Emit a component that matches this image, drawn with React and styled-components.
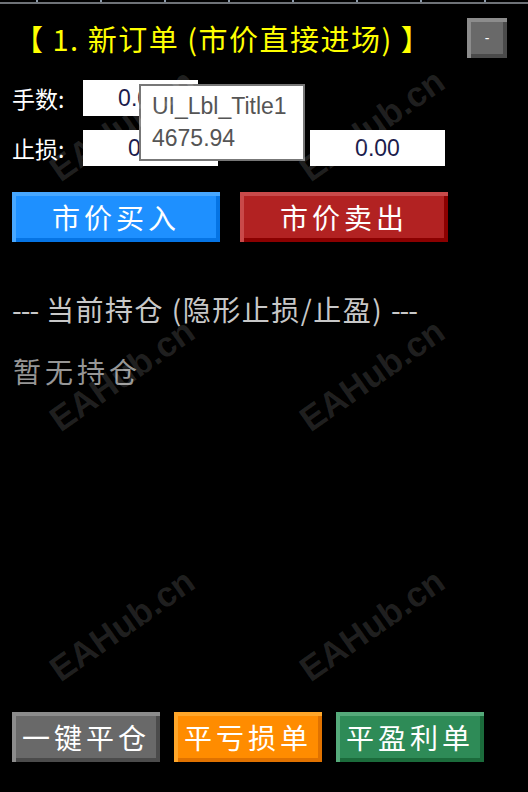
import React from 'react';
import styled, { createGlobalStyle } from 'styled-components';

const GlobalStyle = createGlobalStyle`
  html, body {
    margin: 0;
    padding: 0;
    background: #000;
  }
  body {
    font-family: "Noto Sans CJK SC", "Noto Sans", sans-serif;
  }
`;

const CJK = `"Noto Sans CJK SC", "Noto Sans", sans-serif`;

const Panel = styled.div`
  position: relative;
  width: 528px;
  height: 792px;
  overflow: hidden;
  background: #000;
  display: flex;
  flex-direction: column;
`;

const Ruler = styled.div`
  height: 4px;
  flex: none;
  background:
    repeating-linear-gradient(
      to right,
      transparent 0 36px,
      #8c9aab 36px 38px,
      transparent 38px 64px
    ) top left / 100% 2px no-repeat,
    linear-gradient(#6e7277, #6e7277) 0 2px / 100% 2px no-repeat;
`;

const Header = styled.div`
  display: flex;
  align-items: center;
  justify-content: space-between;
  height: 40px;
  margin-top: 14px;
  padding: 0 21px 0 14px;
`;

const Title = styled.div`
  color: #ffff00;
  font-family: ${CJK};
  font-size: 29px;
  letter-spacing: 1.5px;
  line-height: 1;
  white-space: nowrap;
`;

const bevel = (light, dark, size = 4) => `
  box-shadow: inset ${size}px ${size}px 0 ${light}, inset -${size}px -${size}px 0 ${dark};
`;

const MiniButton = styled.div`
  width: 40px;
  height: 40px;
  background: #696969;
  ${bevel('#8c8c8c', '#4b4b4b')}
  color: #fff;
  font-family: "Liberation Sans", sans-serif;
  font-size: 14px;
  display: flex;
  align-items: center;
  justify-content: center;
`;

const Fields = styled.div`
  display: flex;
  flex-direction: column;
  gap: 14px;
  margin-top: 22px;
  padding: 0 12px;
`;

const FieldRow = styled.div`
  display: flex;
  align-items: center;
  height: 36px;
`;

const Label = styled.span`
  width: 71px;
  color: #fff;
  font-family: ${CJK};
  font-size: 23px;
  line-height: 1;
`;

const Input = styled.div`
  width: ${(p) => p.$w}px;
  height: 36px;
  margin-left: ${(p) => p.$ml || 0}px;
  background: #fff;
  color: #1c1c4c;
  font-family: "Liberation Sans", sans-serif;
  font-size: 23px;
  display: flex;
  align-items: center;
  justify-content: center;
`;

const ActionRow = styled.div`
  display: flex;
  gap: ${(p) => p.$gap}px;
  padding: 0 12px;
  margin-top: ${(p) => p.$mt || 0}px;
`;

const Button = styled.div`
  width: ${(p) => p.$w}px;
  height: 50px;
  background: ${(p) => p.$bg};
  ${(p) => bevel(p.$light, p.$dark)}
  color: #fff;
  font-family: ${CJK};
  font-size: ${(p) => p.$fs || 28}px;
  letter-spacing: ${(p) => p.$ls || 4}px;
  display: flex;
  align-items: center;
  justify-content: center;
  line-height: 1;
  white-space: nowrap;
`;

const SectionTitle = styled.div`
  margin-top: 50px;
  padding: 0 12px;
  color: #c8c8c8;
  font-family: ${CJK};
  font-size: 28px;
  letter-spacing: 1.5px;
  line-height: 34px;
  white-space: nowrap;
`;

const Dashes = styled.span`
  letter-spacing: -1px;
`;

const EmptyText = styled.div`
  margin-top: 28px;
  padding: 0 13px;
  color: #969696;
  font-family: ${CJK};
  font-size: 28px;
  letter-spacing: 4px;
  line-height: 34px;
`;

const Footer = styled(ActionRow)`
  margin-top: auto;
  margin-bottom: 30px;
`;

const Tooltip = styled.div`
  position: absolute;
  left: 139px;
  top: 84px;
  width: 166px;
  height: 77px;
  box-sizing: border-box;
  border: 2px solid #777;
  background: #fff;
  color: #555;
  font-family: "Liberation Sans", sans-serif;
  font-size: 23px;
  line-height: 32px;
  padding: 4px 0 0 11px;
  z-index: 3;
`;

const WatermarkLayer = styled.div`
  position: absolute;
  left: -3px;
  top: 0;
  display: grid;
  grid-template-columns: repeat(2, 250px);
  grid-template-rows: repeat(3, 250px);
  pointer-events: none;
  z-index: 4;
`;

const Mark = styled.div`
  display: flex;
  align-items: center;
  justify-content: center;
  color: rgba(255, 255, 255, 0.13);
  font-family: "Liberation Sans", sans-serif;
  font-weight: bold;
  font-size: 35px;
  transform: rotate(-35deg);
`;

export default function App() {
  return (
    <Panel>
      <GlobalStyle />
      <Ruler />
      <Header>
        <Title>【 1. 新订单 (市价直接进场) 】</Title>
        <MiniButton>-</MiniButton>
      </Header>

      <Fields>
        <FieldRow>
          <Label>手数:</Label>
          <Input $w={115}>0.01</Input>
        </FieldRow>
        <FieldRow>
          <Label>止损:</Label>
          <Input $w={135}>0.00</Input>
          <Input $w={135} $ml={92}>0.00</Input>
        </FieldRow>
      </Fields>

      <ActionRow $gap={20} $mt={26}>
        <Button $w={208} $bg="#1e90ff" $light="#47a7ff" $dark="#0574e4">市价买入</Button>
        <Button $w={208} $bg="#b22222" $light="#c94a4a" $dark="#8b0000">市价卖出</Button>
      </ActionRow>

      <SectionTitle>
        <Dashes>---</Dashes> 当前持仓 (隐形止损/止盈) <Dashes>---</Dashes>
      </SectionTitle>
      <EmptyText>暂无持仓</EmptyText>

      <Footer $gap={14}>
        <Button $w={148} $bg="#696969" $light="#8c8c8c" $dark="#4b4b4b">一键平仓</Button>
        <Button $w={148} $bg="#ff8c00" $light="#ffa629" $dark="#e07200">平亏损单</Button>
        <Button $w={148} $bg="#2e8b57" $light="#55aa7a" $dark="#1b6b3b">平盈利单</Button>
      </Footer>

      <Tooltip>
        UI_Lbl_Title1
        <br />
        4675.94
      </Tooltip>

      <WatermarkLayer>
        {Array.from({ length: 6 }).map((_, i) => (
          <Mark key={i}>EAHub.cn</Mark>
        ))}
      </WatermarkLayer>
    </Panel>
  );
}
